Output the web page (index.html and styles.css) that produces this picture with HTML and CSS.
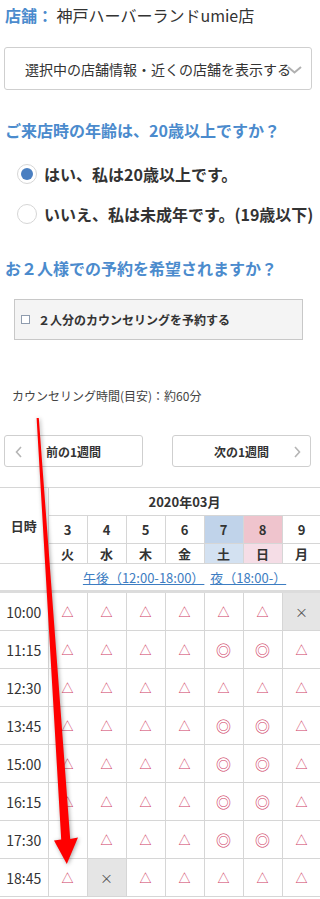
FILE: index.html
```
<!DOCTYPE html>
<html lang="ja">
<head>
<meta charset="utf-8">
<title>予約</title>
<link rel="stylesheet" href="styles.css">
</head>
<body>
<div class="store"><span class="store-label">店舗：</span> 神戸ハーバーランドumie店</div>

<div class="select">
  <span>選択中の店舗情報・近くの店舗を表示する</span>
  <svg class="select-chev" width="15" height="8" viewBox="0 0 15 8"><path d="M1 1 L7.5 6.5 L14 1" fill="none" stroke="#b0b0b0" stroke-width="2"/></svg>
</div>

<h2 class="q q1">ご来店時の年齢は、20歳以上ですか？</h2>
<div class="radios">
  <div class="radio"><span class="rdot on"></span><span>はい、私は20歳以上です。</span></div>
  <div class="radio"><span class="rdot"></span><span>いいえ、私は未成年です。(19歳以下)</span></div>
</div>

<h2 class="q q2">お２人様での予約を希望されますか？</h2>
<div class="check-box"><span class="cbox"></span><span>２人分のカウンセリングを予約する</span></div>

<p class="duration">カウンセリング時間(目安)：約60分</p>

<div class="weeks">
  <div class="week-btn"><svg class="chev chev-l" width="7" height="12" viewBox="0 0 7 12"><path d="M6 1 L1.5 6 L6 11" fill="none" stroke="#b5b5b5" stroke-width="1.6"/></svg>前の1週間</div>
  <div class="week-btn">次の1週間<svg class="chev chev-r" width="7" height="12" viewBox="0 0 7 12"><path d="M1 1 L5.5 6 L1 11" fill="none" stroke="#b5b5b5" stroke-width="1.6"/></svg></div>
</div>

<table class="cal">
  <colgroup><col class="c0"><col class="cd"><col class="cd"><col class="cd"><col class="cd"><col class="cd"><col class="cd"><col class="cd"></colgroup>
  <tr class="r-month"><th rowspan="3" class="first">日時</th><th colspan="7">2020年03月</th></tr>
  <tr class="r-day"><th>3</th><th>4</th><th>5</th><th>6</th><th class="sat">7</th><th class="sun">8</th><th>9</th></tr>
  <tr class="r-wd"><th>火</th><th>水</th><th>木</th><th>金</th><th class="sat2">土</th><th class="sun2">日</th><th>月</th></tr>
  <tr class="r-link"><td class="first"></td><td colspan="7"><a class="lnk">午後（12:00-18:00）</a>&nbsp;&nbsp;<a class="lnk">夜（18:00-）</a></td></tr>
  <tr><td class="first t">10:00</td><td class="tri">△</td><td class="tri">△</td><td class="tri">△</td><td class="tri">△</td><td class="tri">△</td><td class="tri">△</td><td class="x">×</td></tr>
  <tr><td class="first t">11:15</td><td class="tri">△</td><td class="tri">△</td><td class="tri">△</td><td class="tri">△</td><td class="dbl">◎</td><td class="dbl">◎</td><td class="tri">△</td></tr>
  <tr><td class="first t">12:30</td><td class="tri">△</td><td class="tri">△</td><td class="tri">△</td><td class="tri">△</td><td class="tri">△</td><td class="tri">△</td><td class="tri">△</td></tr>
  <tr><td class="first t">13:45</td><td class="tri">△</td><td class="tri">△</td><td class="tri">△</td><td class="tri">△</td><td class="dbl">◎</td><td class="dbl">◎</td><td class="tri">△</td></tr>
  <tr><td class="first t">15:00</td><td class="tri">△</td><td class="tri">△</td><td class="tri">△</td><td class="tri">△</td><td class="dbl">◎</td><td class="dbl">◎</td><td class="tri">△</td></tr>
  <tr><td class="first t">16:15</td><td class="tri">△</td><td class="tri">△</td><td class="tri">△</td><td class="tri">△</td><td class="dbl">◎</td><td class="dbl">◎</td><td class="tri">△</td></tr>
  <tr><td class="first t">17:30</td><td class="tri">△</td><td class="tri">△</td><td class="tri">△</td><td class="tri">△</td><td class="dbl">◎</td><td class="dbl">◎</td><td class="tri">△</td></tr>
  <tr><td class="first t">18:45</td><td class="tri">△</td><td class="x">×</td><td class="tri">△</td><td class="tri">△</td><td class="tri">△</td><td class="tri">△</td><td class="tri">△</td></tr>
</table>

<svg class="arrow" width="320" height="899" viewBox="0 0 320 899">
  <polygon points="36.6,418 38.8,418 70.2,839 78,837.5 66.8,864 54,840.5 61.2,839.5" fill="#ff0000"/>
</svg>
</body>
</html>
```
FILE: styles.css
```
html, body {
  margin: 0;
  padding: 0;
}
body {
  width: 320px;
  position: relative;
  overflow-x: hidden;
  font-family: "Noto Sans CJK JP", "Noto Sans", sans-serif;
  color: #333;
  background: #fff;
}
.store {
  padding: 4px 5px;
  font-size: 16px;
  line-height: 22px;
  white-space: nowrap;
}
.store-label {
  color: #4b8bcd;
  font-weight: bold;
}
.select {
  position: relative;
  margin: 17px 0 0 4px;
  width: 308px;
  height: 43px;
  box-sizing: border-box;
  border: 1px solid #cfcfcf;
  border-radius: 3px;
  display: flex;
  align-items: center;
  padding-left: 20px;
  font-size: 14px;
  white-space: nowrap;
  overflow: hidden;
}
.select-chev {
  position: absolute;
  right: 9px;
  top: 18px;
}
.q {
  margin: 0 0 0 5px;
  font-size: 16px;
  line-height: 24px;
  font-weight: bold;
  color: #4b8bcd;
  white-space: nowrap;
}
.q1 { margin-top: 28px; }
.q2 { margin-top: 30px; }
.radios {
  margin-top: 20px;
  padding-left: 17px;
  display: flex;
  flex-direction: column;
  gap: 16px;
}
.radio {
  display: flex;
  align-items: center;
  gap: 7px;
  height: 24px;
  font-size: 16px;
  font-weight: bold;
  white-space: nowrap;
}
.rdot {
  flex: none;
  width: 20px;
  height: 20px;
  box-sizing: border-box;
  border: 1px solid #d6d6d6;
  border-radius: 50%;
  background: #fff;
  position: relative;
}
.rdot.on::after {
  content: "";
  position: absolute;
  left: 3px;
  top: 3px;
  width: 12px;
  height: 12px;
  border-radius: 50%;
  background: #4a7fc1;
}
.check-box {
  margin: 19px 0 0 14px;
  width: 289px;
  height: 41px;
  box-sizing: border-box;
  border: 1px solid #c8c8c8;
  background: #f4f4f4;
  display: flex;
  align-items: center;
  padding-left: 6px;
  gap: 8px;
  font-size: 12px;
  font-weight: bold;
  white-space: nowrap;
}
.cbox {
  flex: none;
  width: 9px;
  height: 9px;
  box-sizing: border-box;
  border: 1px solid #8f9cae;
  background: #fff;
}
.duration {
  margin: 46px 0 0 12px;
  font-size: 12px;
  line-height: 20px;
  color: #444;
}
.weeks {
  margin: 29px 0 0 4px;
  display: flex;
  gap: 29px;
}
.week-btn {
  position: relative;
  width: 139px;
  height: 32px;
  box-sizing: border-box;
  border: 1px solid #cfcfcf;
  border-radius: 3px;
  display: flex;
  align-items: center;
  justify-content: center;
  font-size: 12px;
  font-weight: bold;
}
.chev {
  position: absolute;
  top: 10px;
}
.chev-l { left: 10px; }
.chev-r { right: 9px; }
.cal {
  margin-top: 20px;
  border-collapse: collapse;
  table-layout: fixed;
  width: 321px;
}
.c0 { width: 48px; }
.cd { width: 39px; }
.cal th, .cal td {
  border: 1px solid #d6d6d6;
  text-align: center;
  padding: 0;
}
.cal .first { border-left: none; }
.cal th {
  font-size: 13px;
  font-weight: bold;
  color: #333;
}
.r-month th { height: 27px; }
.r-day th { height: 27px; }
.r-wd th { height: 19px; line-height: 18px; }
.r-link td {
  height: 26px;
  border-bottom: 3px solid #dcdcdc;
  font-size: 13px;
}
.lnk {
  color: #3d7dc2;
  text-decoration: underline;
}
.sat { background: #c0d3ea; }
.sun { background: #efc4cd; }
.sat2 { background: #d3e1f1; }
.sun2 { background: #f5dde6; }
.cal td.t {
  height: 37px;
  font-size: 14px;
  color: #333;
}
.tri {
  color: #cf3b63;
  font-size: 12px;
}
.dbl {
  color: #cf3b63;
  font-size: 15px;
}
.x {
  background: #e5e5e5;
  color: #555;
  font-size: 13px;
}
.arrow {
  position: absolute;
  left: 0;
  top: 0;
  pointer-events: none;
  filter: drop-shadow(1px 1px 2px rgba(0,0,0,0.35));
}
```
